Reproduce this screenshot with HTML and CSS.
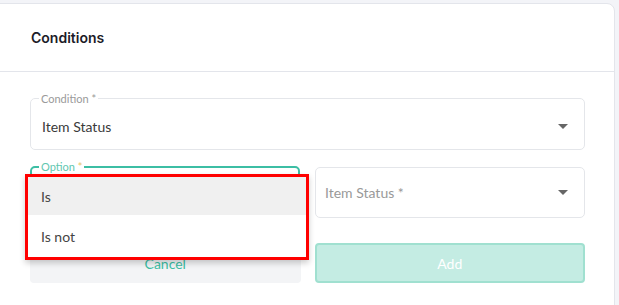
FILE: index.html
```html
<!DOCTYPE html>
<html lang="en">
    <head>
        <meta charset="UTF-8">
        <meta name="viewport" content="width=device-width, initial-scale=1.0">
        <link rel="stylesheet" href="styles.css">
        <title>Conditions</title>
    </head>
    <body>
        <div class="card">
            <div class="card-header">
                <h2>Conditions</h2>
            </div>
            <div class="card-body">
                <fieldset class="field">
                    <legend>Condition <span class="req">*</span></legend>
                    <div class="field-value">
                        <span>Item Status</span>
                        <span class="arrow"></span>
                    </div>
                </fieldset>

                <div class="row">
                    <div class="select-wrap">
                        <fieldset class="field focused">
                            <legend>Option <span class="req">*</span></legend>
                            <div class="field-value"></div>
                        </fieldset>
                        <ul class="menu">
                            <li class="active">Is</li>
                            <li>Is not</li>
                        </ul>
                    </div>
                    <div class="field plain">
                        <div class="field-value">
                            <span class="placeholder">Item Status *</span>
                            <span class="arrow"></span>
                        </div>
                    </div>
                </div>

                <div class="row buttons">
                    <button class="btn btn-cancel" type="button">Cancel</button>
                    <button class="btn btn-add" type="button" disabled>Add</button>
                </div>
            </div>
        </div>
    </body>
</html>
```

FILE: styles.css
```css
body {
    margin: 0;
    font-family: Lato, "Open Sans", sans-serif;
    background-color: #f3f4f8;
    overflow: hidden;
}

.card {
    margin: 3px 4px 0 -10px;
    height: 310px;
    background-color: #fff;
    border: 1px solid #e3e5eb;
    border-radius: 8px;
}

.card-header {
    height: 67px;
    padding-left: 40px;
    display: flex;
    align-items: center;
    border-bottom: 1px solid #e3e5eb;
}

.card-header h2 {
    margin: 0;
    font-family: Inter, sans-serif;
    font-size: 14px;
    font-weight: 600;
    color: #1c1c28;
}

.card-body {
    padding: 20px 29px 0 39px;
}

.field {
    margin: 0;
    padding: 0 8px;
    border: 1px solid #e4e6ea;
    border-radius: 5px;
    min-width: 0;
}

.field legend {
    padding: 0 2px;
    font-size: 11px;
    line-height: 13px;
    color: #9a9a9a;
}

.field-value {
    height: 42px;
    padding: 0 2px 2px 3px;
    display: flex;
    align-items: center;
    justify-content: space-between;
    font-size: 14px;
    color: #3a3a3a;
}

.arrow {
    width: 0;
    height: 0;
    margin-right: 6px;
    border-left: 5px solid transparent;
    border-right: 5px solid transparent;
    border-top: 5px solid #666;
}

.row {
    display: grid;
    grid-template-columns: 1fr 1fr;
    gap: 15px;
    margin-top: 10px;
}

.select-wrap {
    position: relative;
}

.field.focused {
    border: 2px solid #3cbea4;
    padding: 0 7px;
}

.field.focused .field-value {
    height: 38px;
}

.field.focused legend {
    color: #5fc7b0;
}

.field.focused .req {
    color: #e9c46a;
}

.field.plain {
    margin-top: 7px;
    padding: 0 8px;
}

.field.plain .field-value {
    height: 49px;
    padding: 0 2px 0 1px;
}

.placeholder {
    color: #999;
}

.menu {
    position: absolute;
    top: 14px;
    left: -5px;
    right: -9px;
    margin: 0;
    padding: 0;
    list-style: none;
    background-color: #fff;
    border: 3px solid #ff0000;
    box-shadow: 0 3px 6px rgba(0, 0, 0, 0.2);
}

.menu li {
    height: 42px;
    padding-left: 13px;
    display: flex;
    align-items: center;
    font-size: 14px;
    color: #444;
}

.menu li.active {
    height: 38px;
    background-color: #f0f0f0;
}

.buttons {
    margin-top: 25px;
    gap: 14px;
}

.btn {
    height: 40px;
    border-radius: 4px;
    font-family: Lato, sans-serif;
    font-size: 14px;
}

.btn-cancel {
    background-color: #f3f4f6;
    border: none;
    color: #3cbea4;
}

.btn-add {
    background-color: #c4ece3;
    border: 2px solid #a0e0d0;
    color: #fff;
}
```
